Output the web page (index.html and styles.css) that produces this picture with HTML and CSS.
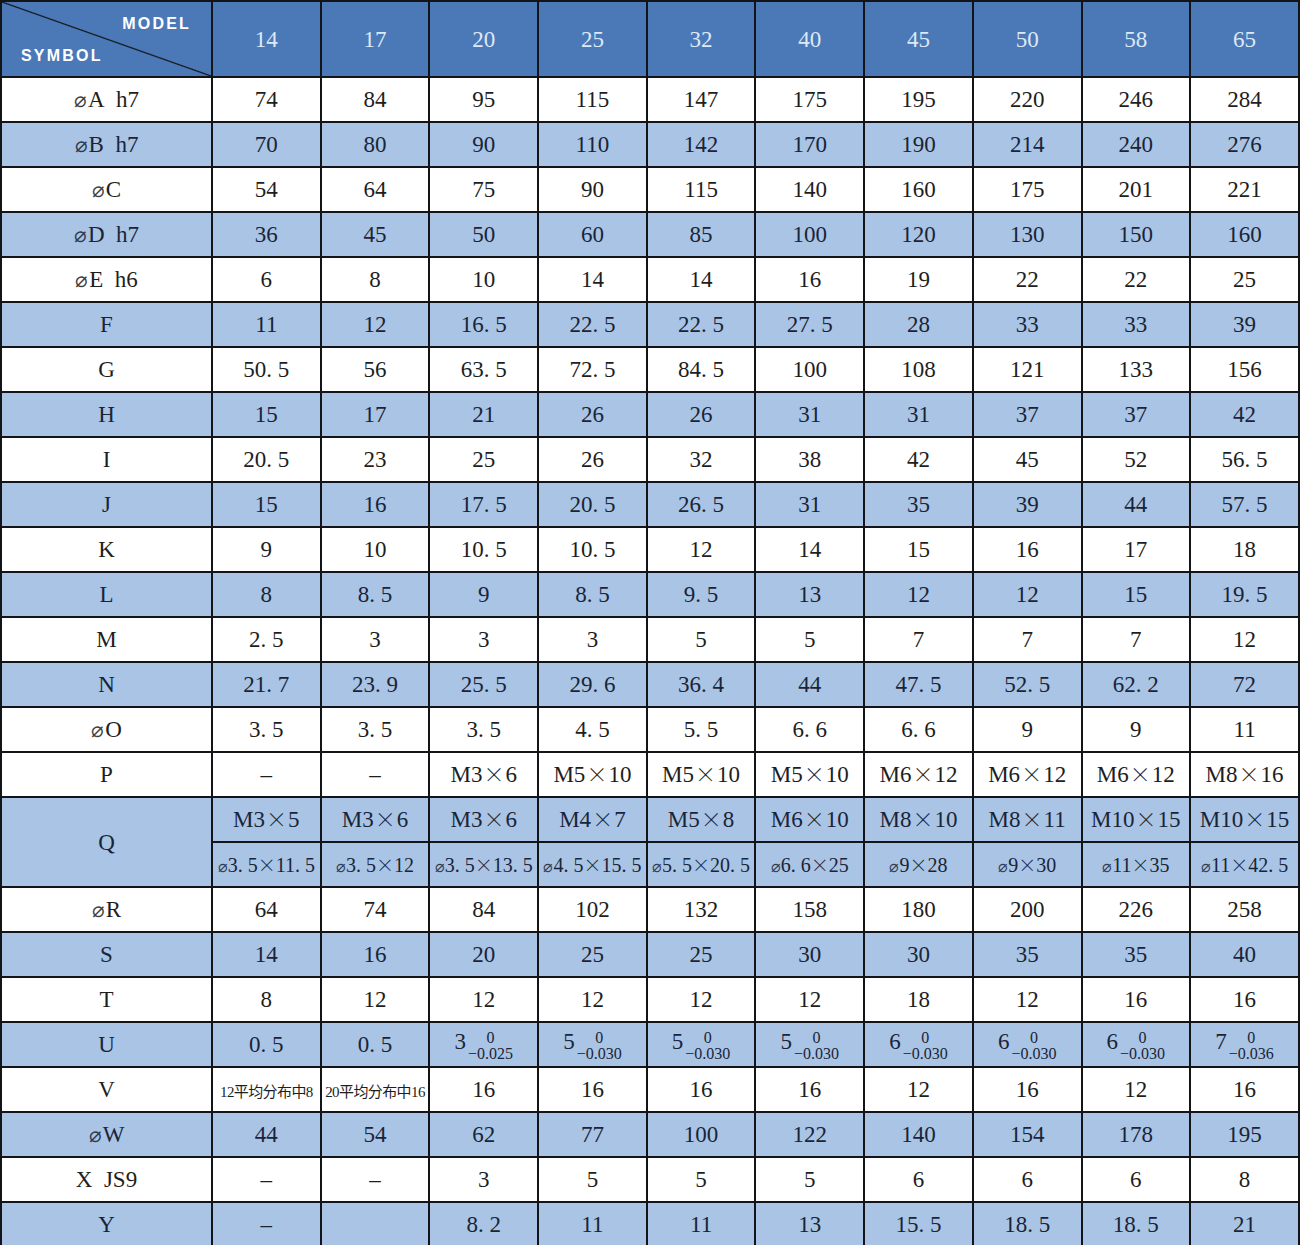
FILE: index.html
```html
<!DOCTYPE html>
<html lang="en">
<head>
<meta charset="utf-8">
<title>Spec table</title>
<link rel="stylesheet" href="styles.css">
</head>
<body>
<table class="spec">
  <colgroup>
    <col class="c-sym">
    <col><col><col><col><col><col><col><col><col><col>
  </colgroup>
  <thead>
    <tr class="head">
      <th class="corner"><div class="corner-in"><span class="model">MODEL</span><span class="symbol">SYMBOL</span></div></th>
      <th>14</th><th>17</th><th>20</th><th>25</th><th>32</th><th>40</th><th>45</th><th>50</th><th>58</th><th>65</th>
    </tr>
  </thead>
  <tbody>
    <tr class="w"><td><span class="dia">⌀</span>A&ensp;h7</td><td>74</td><td>84</td><td>95</td><td>115</td><td>147</td><td>175</td><td>195</td><td>220</td><td>246</td><td>284</td></tr>
    <tr class="b"><td><span class="dia">⌀</span>B&ensp;h7</td><td>70</td><td>80</td><td>90</td><td>110</td><td>142</td><td>170</td><td>190</td><td>214</td><td>240</td><td>276</td></tr>
    <tr class="w"><td><span class="dia">⌀</span>C</td><td>54</td><td>64</td><td>75</td><td>90</td><td>115</td><td>140</td><td>160</td><td>175</td><td>201</td><td>221</td></tr>
    <tr class="b"><td><span class="dia">⌀</span>D&ensp;h7</td><td>36</td><td>45</td><td>50</td><td>60</td><td>85</td><td>100</td><td>120</td><td>130</td><td>150</td><td>160</td></tr>
    <tr class="w"><td><span class="dia">⌀</span>E&ensp;h6</td><td>6</td><td>8</td><td>10</td><td>14</td><td>14</td><td>16</td><td>19</td><td>22</td><td>22</td><td>25</td></tr>
    <tr class="b"><td>F</td><td>11</td><td>12</td><td>16. 5</td><td>22. 5</td><td>22. 5</td><td>27. 5</td><td>28</td><td>33</td><td>33</td><td>39</td></tr>
    <tr class="w"><td>G</td><td>50. 5</td><td>56</td><td>63. 5</td><td>72. 5</td><td>84. 5</td><td>100</td><td>108</td><td>121</td><td>133</td><td>156</td></tr>
    <tr class="b"><td>H</td><td>15</td><td>17</td><td>21</td><td>26</td><td>26</td><td>31</td><td>31</td><td>37</td><td>37</td><td>42</td></tr>
    <tr class="w"><td>I</td><td>20. 5</td><td>23</td><td>25</td><td>26</td><td>32</td><td>38</td><td>42</td><td>45</td><td>52</td><td>56. 5</td></tr>
    <tr class="b"><td>J</td><td>15</td><td>16</td><td>17. 5</td><td>20. 5</td><td>26. 5</td><td>31</td><td>35</td><td>39</td><td>44</td><td>57. 5</td></tr>
    <tr class="w"><td>K</td><td>9</td><td>10</td><td>10. 5</td><td>10. 5</td><td>12</td><td>14</td><td>15</td><td>16</td><td>17</td><td>18</td></tr>
    <tr class="b"><td>L</td><td>8</td><td>8. 5</td><td>9</td><td>8. 5</td><td>9. 5</td><td>13</td><td>12</td><td>12</td><td>15</td><td>19. 5</td></tr>
    <tr class="w"><td>M</td><td>2. 5</td><td>3</td><td>3</td><td>3</td><td>5</td><td>5</td><td>7</td><td>7</td><td>7</td><td>12</td></tr>
    <tr class="b"><td>N</td><td>21. 7</td><td>23. 9</td><td>25. 5</td><td>29. 6</td><td>36. 4</td><td>44</td><td>47. 5</td><td>52. 5</td><td>62. 2</td><td>72</td></tr>
    <tr class="w"><td><span class="dia">⌀</span>O</td><td>3. 5</td><td>3. 5</td><td>3. 5</td><td>4. 5</td><td>5. 5</td><td>6. 6</td><td>6. 6</td><td>9</td><td>9</td><td>11</td></tr>
    <tr class="w"><td>P</td><td>–</td><td>–</td><td>M3<span class="x">×</span>6</td><td>M5<span class="x">×</span>10</td><td>M5<span class="x">×</span>10</td><td>M5<span class="x">×</span>10</td><td>M6<span class="x">×</span>12</td><td>M6<span class="x">×</span>12</td><td>M6<span class="x">×</span>12</td><td>M8<span class="x">×</span>16</td></tr>
    <tr class="b"><td rowspan="2">Q</td><td>M3<span class="x">×</span>5</td><td>M3<span class="x">×</span>6</td><td>M3<span class="x">×</span>6</td><td>M4<span class="x">×</span>7</td><td>M5<span class="x">×</span>8</td><td>M6<span class="x">×</span>10</td><td>M8<span class="x">×</span>10</td><td>M8<span class="x">×</span>11</td><td>M10<span class="x">×</span>15</td><td>M10<span class="x">×</span>15</td></tr>
    <tr class="b q2"><td><span class="dia">⌀</span>3. 5<span class="x">×</span>11. 5</td><td><span class="dia">⌀</span>3. 5<span class="x">×</span>12</td><td><span class="dia">⌀</span>3. 5<span class="x">×</span>13. 5</td><td><span class="dia">⌀</span>4. 5<span class="x">×</span>15. 5</td><td><span class="dia">⌀</span>5. 5<span class="x">×</span>20. 5</td><td><span class="dia">⌀</span>6. 6<span class="x">×</span>25</td><td><span class="dia">⌀</span>9<span class="x">×</span>28</td><td><span class="dia">⌀</span>9<span class="x">×</span>30</td><td><span class="dia">⌀</span>11<span class="x">×</span>35</td><td><span class="dia">⌀</span>11<span class="x">×</span>42. 5</td></tr>
    <tr class="w"><td><span class="dia">⌀</span>R</td><td>64</td><td>74</td><td>84</td><td>102</td><td>132</td><td>158</td><td>180</td><td>200</td><td>226</td><td>258</td></tr>
    <tr class="b"><td>S</td><td>14</td><td>16</td><td>20</td><td>25</td><td>25</td><td>30</td><td>30</td><td>35</td><td>35</td><td>40</td></tr>
    <tr class="w"><td>T</td><td>8</td><td>12</td><td>12</td><td>12</td><td>12</td><td>12</td><td>18</td><td>12</td><td>16</td><td>16</td></tr>
    <tr class="b"><td>U</td><td>0. 5</td><td>0. 5</td>
      <td><span class="tol"><span class="base">3</span><span class="dev"><span>0</span><span>−0.025</span></span></span></td>
      <td><span class="tol"><span class="base">5</span><span class="dev"><span>0</span><span>−0.030</span></span></span></td>
      <td><span class="tol"><span class="base">5</span><span class="dev"><span>0</span><span>−0.030</span></span></span></td>
      <td><span class="tol"><span class="base">5</span><span class="dev"><span>0</span><span>−0.030</span></span></span></td>
      <td><span class="tol"><span class="base">6</span><span class="dev"><span>0</span><span>−0.030</span></span></span></td>
      <td><span class="tol"><span class="base">6</span><span class="dev"><span>0</span><span>−0.030</span></span></span></td>
      <td><span class="tol"><span class="base">6</span><span class="dev"><span>0</span><span>−0.030</span></span></span></td>
      <td><span class="tol"><span class="base">7</span><span class="dev"><span>0</span><span>−0.036</span></span></span></td>
    </tr>
    <tr class="w"><td>V</td><td><span class="cn" lang="zh">12平均分布中8</span></td><td><span class="cn" lang="zh">20平均分布中16</span></td><td>16</td><td>16</td><td>16</td><td>16</td><td>12</td><td>16</td><td>12</td><td>16</td></tr>
    <tr class="b"><td><span class="dia">⌀</span>W</td><td>44</td><td>54</td><td>62</td><td>77</td><td>100</td><td>122</td><td>140</td><td>154</td><td>178</td><td>195</td></tr>
    <tr class="w"><td>X&ensp;JS9</td><td>–</td><td>–</td><td>3</td><td>5</td><td>5</td><td>5</td><td>6</td><td>6</td><td>6</td><td>8</td></tr>
    <tr class="b"><td>Y</td><td>–</td><td></td><td>8. 2</td><td>11</td><td>11</td><td>13</td><td>15. 5</td><td>18. 5</td><td>18. 5</td><td>21</td></tr>
  </tbody>
</table>
</body>
</html>
```

FILE: styles.css
```css
html, body {
  margin: 0;
  padding: 0;
  background: #ffffff;
}

.spec {
  width: 1300px;
  border-collapse: collapse;
  table-layout: fixed;
  font-family: "Liberation Serif", "Times New Roman", "DejaVu Serif", serif;
  font-size: 23px;
  color: #1e1e1e;
}

.c-sym {
  width: 211px;
}

.spec th,
.spec td {
  border: 2px solid #121418;
  text-align: center;
  vertical-align: middle;
  padding: 0;
  line-height: 1;
  white-space: nowrap;
  font-family: "Liberation Serif", "Times New Roman", "DejaVu Serif", serif;
}

.head {
  height: 74px;
}

.head th {
  background: #4b79b8;
  color: #dde9f6;
  font-weight: normal;
  font-size: 23px;
}

.spec tbody tr {
  height: 45px;
}

.w td {
  background: #ffffff;
}

.b td {
  background: #a9c4e4;
  color: #1a2438;
}

.head th.corner {
  background: linear-gradient(to top right, transparent calc(50% - 1.2px), #121418 50%, transparent calc(50% + 1.2px)), #4b79b8;
}

.corner-in {
  height: 74px;
  box-sizing: border-box;
  padding: 14px 20px 12px 19px;
  display: flex;
  flex-direction: column;
  justify-content: space-between;
  font-family: "Liberation Sans", Arial, sans-serif;
  font-weight: bold;
  font-size: 16px;
  letter-spacing: 2.2px;
  color: #ffffff;
}

.model {
  align-self: flex-end;
}

.symbol {
  align-self: flex-start;
}

.dia {
  font-family: "DejaVu Sans", sans-serif;
  font-size: 21px;
  font-weight: 300;
  margin-right: 1px;
  opacity: 0.85;
}

.x {
  font-family: "Noto Sans CJK SC", sans-serif;
  font-size: 21px;
  font-weight: 300;
  margin: 0 1px;
}

.q2 td {
  font-size: 20px;
}

.q2 .x {
  font-size: 18px;
  margin: 0;
}

.q2 .dia {
  font-size: 16px;
  margin-right: 0;
}

.tol {
  display: inline-flex;
  align-items: center;
}

.base {
  font-size: 23px;
  position: relative;
  top: -3px;
}

.dev {
  display: inline-flex;
  flex-direction: column;
  align-items: center;
  font-size: 16px;
  line-height: 16px;
  margin-left: 2px;
  position: relative;
  top: 1px;
}

.cn {
  font-family: "Liberation Serif", "Noto Sans CJK SC", serif;
  font-size: 15px;
  letter-spacing: -0.6px;
}
```
